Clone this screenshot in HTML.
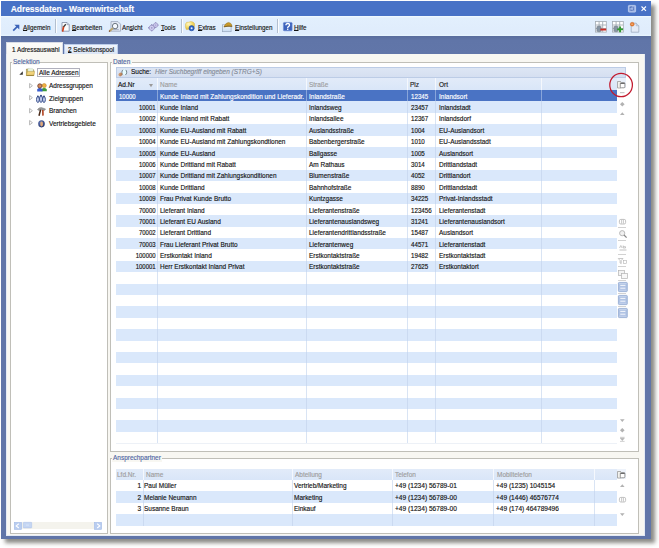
<!DOCTYPE html><html><head><meta charset="utf-8"><style>
*{margin:0;padding:0;box-sizing:border-box}
html,body{width:659px;height:548px;overflow:hidden;background:#fff;font-family:"Liberation Sans", sans-serif;}
.ab{position:absolute}
.t{position:absolute;font-size:7.4px;letter-spacing:0px;line-height:8px;white-space:nowrap;color:#141414;-webkit-text-stroke:0.16px currentColor;transform:scaleX(0.875);transform-origin:0 50%}
.r{transform-origin:100% 50%}
svg{position:absolute;overflow:visible}
u{text-decoration-thickness:0.55px;text-underline-offset:0.2px}
</style></head><body>
<div class="ab" style="left:1.30px;top:1.30px;width:649.50px;height:537.70px;background:#6075a8;box-shadow:4px 4px 4px rgba(25,25,15,0.5)"></div>
<div class="ab" style="left:1.30px;top:1.30px;width:649.50px;height:15.00px;background:#4872c6"></div>
<div class="t" style="left:10.70px;top:5.20px;font-weight:bold;font-size:8.5px;letter-spacing:-0.05px;color:#fff;transform:none;-webkit-text-stroke:0.1px #fff">Adressdaten - Warenwirtschaft</div>
<svg style="left:628.1px;top:5px" width="8" height="7.5" viewBox="0 0 8 7.5"><rect x="0.4" y="0.4" width="7.2" height="6.7" rx="0.8" fill="#9fb6e6" stroke="#c3d2f0" stroke-width="0.8"/><path d="M2 2.2 H5.6 V5.3 H2 Z M3.2 2.2 V1.4" fill="none" stroke="#3b5aa6" stroke-width="0.8" stroke-dasharray="0.9 0.5"/></svg>
<svg style="left:640.7px;top:5.9px" width="5.5" height="5.3" viewBox="0 0 5.5 5.3"><path d="M0.5 0.5 L5 4.8 M5 0.5 L0.5 4.8" stroke="#fff" stroke-width="1.1"/></svg>
<div class="ab" style="left:1.30px;top:16.30px;width:649.50px;height:19.60px;background:linear-gradient(#f2fbff,#e2effd 10%,#dfecfc 90%,#e8f5fe)"></div>
<div class="ab" style="left:55.10px;top:19.30px;width:1.00px;height:13.80px;background:#b3bfcf"></div>
<div class="ab" style="left:56.10px;top:19.30px;width:0.80px;height:13.80px;background:#fbfdff"></div>
<div class="ab" style="left:180.60px;top:19.30px;width:1.00px;height:13.80px;background:#b3bfcf"></div>
<div class="ab" style="left:181.60px;top:19.30px;width:0.80px;height:13.80px;background:#fbfdff"></div>
<div class="ab" style="left:276.80px;top:19.30px;width:1.00px;height:13.80px;background:#b3bfcf"></div>
<div class="ab" style="left:277.80px;top:19.30px;width:0.80px;height:13.80px;background:#fbfdff"></div>
<svg style="left:12px;top:23.5px" width="8" height="7.5" viewBox="0 0 8 7.5"><path d="M1.2 6.6 L6 1.8" stroke="#3b63b8" stroke-width="1.7"/><path d="M2.4 0.7 H7.3 V5.6 Z" fill="#3b63b8"/></svg>
<div class="t" style="left:23.30px;top:23.90px;transform:scaleX(0.845)"><u>A</u>llgemein</div>
<svg style="left:60.8px;top:21.8px" width="9" height="10" viewBox="0 0 9 10"><path d="M1 0.5 H6 L8.2 2.7 V9.2 H1 Z" fill="#fbfcfe" stroke="#7f8da6" stroke-width="0.8"/><path d="M6 0.5 V2.7 H8.2" fill="#c9d3e4" stroke="#7f8da6" stroke-width="0.5"/><path d="M4.8 2.3 L2.2 5.2" stroke="#3a3a3a" stroke-width="1.3"/><path d="M2.6 4.6 L1.6 9.6" stroke="#d0401c" stroke-width="1.7"/></svg>
<div class="t" style="left:72.00px;top:23.90px;transform:scaleX(0.845)"><u>B</u>earbeiten</div>
<svg style="left:107.8px;top:20.9px" width="13.2" height="11" viewBox="0 0 13.2 11"><path d="M3 0.6 H10 L12.6 3.2 V10.2 H3 Z" fill="#e3eaf5" stroke="#9aa6ba" stroke-width="0.8"/><path d="M4.3 8.6 H10.8" stroke="#8e9ab0" stroke-width="0.7"/><circle cx="7.1" cy="5.1" r="2.7" fill="#f6faff" stroke="#66717c" stroke-width="1"/><path d="M4.9 7.2 L1.3 10.2" stroke="#bda870" stroke-width="2"/><path d="M2.2 9.6 L1 10.6" stroke="#7a4a30" stroke-width="1.2"/></svg>
<div class="t" style="left:121.50px;top:23.90px;transform:scaleX(0.845)">An<u>s</u>icht</div>
<svg style="left:148.2px;top:21.9px" width="11" height="10" viewBox="0 0 11 10"><g fill="#8c88ba"><rect x="3.2" y="2.3" width="1.1" height="7"/><rect x="0.2" y="5.3" width="7" height="1.1"/><rect x="1.2" y="3.3" width="5" height="5" transform="rotate(45 3.75 5.85)"/><rect x="7.2" y="0.2" width="1" height="5.8"/><rect x="4.8" y="2.6" width="5.8" height="1"/><rect x="6" y="1.4" width="3.4" height="3.4" transform="rotate(45 7.7 3.1)"/></g><circle cx="3.75" cy="5.85" r="2.6" fill="#d2cff0" stroke="#8a86b8" stroke-width="0.5"/><circle cx="7.7" cy="3.1" r="2.2" fill="#cdc9ee" stroke="#8a86b8" stroke-width="0.5"/><circle cx="3.75" cy="5.85" r="0.9" fill="#9d99c8"/><circle cx="7.7" cy="3.1" r="0.7" fill="#9d99c8"/></svg>
<div class="t" style="left:160.80px;top:23.90px;transform:scaleX(0.845)"><u>T</u>ools</div>
<svg style="left:185.4px;top:21.4px" width="10.5" height="10.2" viewBox="0 0 10.5 10.2"><defs><radialGradient id="yg" cx="0.35" cy="0.3" r="0.8"><stop offset="0" stop-color="#fff8c8"/><stop offset="0.5" stop-color="#f5dc6a"/><stop offset="1" stop-color="#d8b23a"/></radialGradient></defs><path d="M0.5 3 Q1.2 0.6 3.6 1.2 Q5.6 0 8 1 Q10 1.8 9.6 4.6 L9 8 L1.2 8.6 Q0 6 0.5 3 Z" fill="url(#yg)" stroke="#d2ae40" stroke-width="0.4"/><circle cx="6.6" cy="7.2" r="2.6" fill="#2a62c8" stroke="#1a3f8a" stroke-width="0.5"/><circle cx="6.6" cy="7.2" r="1" fill="#e8f0ff"/></svg>
<div class="t" style="left:197.70px;top:23.90px;transform:scaleX(0.845)"><u>E</u>xtras</div>
<svg style="left:222px;top:21.6px" width="10.5" height="10.2" viewBox="0 0 10.5 10.2"><defs><linearGradient id="wg" x1="0" y1="0" x2="0" y2="1"><stop offset="0" stop-color="#f4f8fc"/><stop offset="1" stop-color="#c8dcf2"/></linearGradient></defs><rect x="0.5" y="2.8" width="8.6" height="6.9" fill="url(#wg)" stroke="#97a6bb" stroke-width="0.7"/><path d="M1.8 4.9 Q3.5 0.6 6.8 0.4 Q9.6 0.8 10.2 4.4 Q6 3.9 1.8 4.9 Z" fill="#c99a2c" stroke="#8e6a18" stroke-width="0.4"/><path d="M2 4.8 Q6 3.8 10 4.4" stroke="#5a4010" stroke-width="0.6" fill="none"/></svg>
<div class="t" style="left:234.80px;top:23.90px;transform:scaleX(0.845)"><u>E</u>instellungen</div>
<svg style="left:282.6px;top:21.9px" width="9.5" height="9.2" viewBox="0 0 9.5 9.2"><rect x="0.4" y="0.4" width="8.7" height="8.4" rx="0.9" fill="#3c62bc" stroke="#6a8ad4" stroke-width="0.6"/><path d="M2.9 3.2 Q2.9 1.5 4.8 1.5 Q6.6 1.5 6.6 3.1 Q6.6 4.2 5.2 4.8 Q4.7 5.1 4.7 6" fill="none" stroke="#fff" stroke-width="1.3"/><rect x="4" y="6.6" width="1.4" height="1.3" fill="#fff"/></svg>
<div class="t" style="left:294.30px;top:23.90px;transform:scaleX(0.845)"><u>H</u>ilfe</div>
<svg style="left:595.4px;top:21.3px" width="12" height="12" viewBox="0 0 12 12"><rect x="0.5" y="0.5" width="10.8" height="10.6" fill="#fff" stroke="#a3abb4" stroke-width="0.8"/><path d="M0.5 4 H11.3 M0.5 7.5 H11.3 M4.1 0.5 V11.1 M7.7 0.5 V11.1" stroke="#a3abb4" stroke-width="0.9"/><path d="M1.8 5.5 Q4 4.6 6.2 5.5 V10.3 Q4 11.2 1.8 10.3 Z" fill="#8795a3" stroke="#66727f" stroke-width="0.4"/><rect x="5.4" y="7.6" width="5.8" height="1.9" fill="#cc2a22"/></svg>
<svg style="left:611.9px;top:21.3px" width="12" height="12" viewBox="0 0 12 12"><rect x="0.5" y="0.5" width="10.8" height="10.6" fill="#fff" stroke="#a3abb4" stroke-width="0.8"/><path d="M0.5 4 H11.3 M0.5 7.5 H11.3 M4.1 0.5 V11.1 M7.7 0.5 V11.1" stroke="#a3abb4" stroke-width="0.9"/><path d="M1.8 5.5 Q4 4.6 6.2 5.5 V10.3 Q4 11.2 1.8 10.3 Z" fill="#8795a3" stroke="#66727f" stroke-width="0.4"/><path d="M5.2 8.4 H11 M8.1 5.6 V11.3" stroke="#2f9a2f" stroke-width="1.9"/></svg>
<svg style="left:629.8px;top:21.8px" width="10" height="11" viewBox="0 0 10 11"><path d="M1.2 1.2 H6.2 L8.8 3.8 V10.2 H1.2 Z" fill="#e4ebf7" stroke="#95a3b8" stroke-width="0.7"/><path d="M6.2 1.2 V3.8 H8.8" fill="#c8d3e6" stroke="#95a3b8" stroke-width="0.4"/><circle cx="2.2" cy="2.2" r="2" fill="#e57a2c" stroke="#c65a1a" stroke-width="0.3"/><path d="M1.2 2.2 H3.2" stroke="#fde3c8" stroke-width="0.6"/></svg>
<div class="ab" style="left:1.30px;top:35.90px;width:649.50px;height:18.10px;background:linear-gradient(#586c9c,#6075a8 25%,#6176a9)"></div>
<div class="ab" style="left:63.70px;top:43.80px;width:54.10px;height:10.70px;background:linear-gradient(#f0f5fd,#dae5f6);border:1px solid #bccdea;border-bottom:none"></div>
<div class="ab" style="left:5.90px;top:41.80px;width:57.60px;height:12.70px;background:linear-gradient(#fcfcfa,#f8f7f2);border:1px solid #d9dde6;border-bottom:none"></div>
<div class="t" style="left:12.20px;top:45.60px;transform:scaleX(0.855)">1 Adressauswahl</div>
<div class="t" style="left:68.20px;top:46.10px;transform:scaleX(0.852)"><u>2</u> Selektionspool</div>
<div class="ab" style="left:6.20px;top:53.80px;width:639.00px;height:482.40px;background:#f8f7f2;border:0.8px solid #e4eaf4;border-top:none"></div>
<div class="ab" style="left:6.90px;top:54.00px;width:55.60px;height:1.00px;background:#f8f7f2"></div>
<div class="ab" style="left:10.20px;top:62.00px;width:98.20px;height:471.90px;background:#fff;border:1px solid #c0bfb8"></div>
<div class="ab" style="left:12.00px;top:58.00px;width:27.20px;height:7.00px;background:#f8f7f2"></div>
<div class="t" style="left:13.00px;top:58.00px;color:#5068a4">Selektion</div>
<div class="ab" style="left:110.40px;top:62.00px;width:528.70px;height:390.30px;background:#fff;border:1px solid #c0bfb8"></div>
<div class="ab" style="left:112.00px;top:58.00px;width:19.50px;height:7.00px;background:#f8f7f2"></div>
<div class="t" style="left:112.90px;top:58.00px;color:#5068a4">Daten</div>
<div class="ab" style="left:110.40px;top:458.00px;width:528.70px;height:75.90px;background:#fff;border:1px solid #c0bfb8"></div>
<div class="ab" style="left:112.00px;top:454.00px;width:50.00px;height:8.00px;background:#f8f7f2"></div>
<div class="t" style="left:113.00px;top:453.90px;color:#5068a4">Ansprechpartner</div>
<svg style="left:19px;top:71.3px" width="4" height="4" viewBox="0 0 4 4"><path d="M3.8 0.3 V3.8 H0.3 Z" fill="#333"/></svg>
<svg style="left:26px;top:68.2px" width="9" height="8" viewBox="0 0 9 8"><path d="M0.4 1 H3.2 L4 1.8 H7.8 V7.4 H0.4 Z" fill="#b9a24a" stroke="#8a7428" stroke-width="0.4"/><path d="M1.8 0.4 H6.4 L7.2 1.2 V4 H1.8 Z" fill="#e6f2e0" stroke="#b8c8b0" stroke-width="0.3"/><path d="M0.4 7.6 L1.4 3.4 H8.6 L7.8 7.6 Z" fill="#f1d27a" stroke="#a88a30" stroke-width="0.4"/><path d="M0.6 7.4 H7.8" stroke="#7a6420" stroke-width="0.6"/></svg>
<div class="ab" style="left:37.10px;top:68.10px;width:42.70px;height:9.40px;border:0.9px solid #b0b0bc;background:#fcfcfc"></div>
<div class="t" style="left:38.80px;top:68.60px;">Alle Adressen</div>
<svg style="left:28.7px;top:82.8px" width="4" height="6" viewBox="0 0 4 6"><path d="M0.6 0.5 L3.4 2.7 L0.6 4.9 Z" fill="#fff" stroke="#9a9a9a" stroke-width="0.7"/></svg>
<div class="t" style="left:49.30px;top:82.20px;">Adressgruppen</div>
<svg style="left:28.7px;top:95.1px" width="4" height="6" viewBox="0 0 4 6"><path d="M0.6 0.5 L3.4 2.7 L0.6 4.9 Z" fill="#fff" stroke="#9a9a9a" stroke-width="0.7"/></svg>
<div class="t" style="left:49.30px;top:94.50px;">Zielgruppen</div>
<svg style="left:28.7px;top:107.89999999999999px" width="4" height="6" viewBox="0 0 4 6"><path d="M0.6 0.5 L3.4 2.7 L0.6 4.9 Z" fill="#fff" stroke="#9a9a9a" stroke-width="0.7"/></svg>
<div class="t" style="left:49.30px;top:107.30px;">Branchen</div>
<svg style="left:28.7px;top:120.3px" width="4" height="6" viewBox="0 0 4 6"><path d="M0.6 0.5 L3.4 2.7 L0.6 4.9 Z" fill="#fff" stroke="#9a9a9a" stroke-width="0.7"/></svg>
<div class="t" style="left:49.30px;top:119.70px;">Vertriebsgebiete</div>
<svg style="left:36.6px;top:82.6px" width="10" height="8.5" viewBox="0 0 10 8.5"><path d="M4.4 8.3 V6.2 Q7.2 3.6 9.8 6.2 V8.3 Z" fill="#3c9a3c"/><circle cx="7.2" cy="2.6" r="2.1" fill="#f0b040" stroke="#b87a20" stroke-width="0.5"/><path d="M0.2 8.4 V6.3 Q2.8 3.8 5.5 6.3 V8.4 Z" fill="#3a5ed0"/><circle cx="2.8" cy="2.9" r="2.1" fill="#d08a60" stroke="#5a2a12" stroke-width="0.7"/></svg>
<svg style="left:36.3px;top:94.8px" width="10" height="8" viewBox="0 0 10 8"><g stroke="#2f4682" stroke-width="0.9" fill="#c9d3f2"><ellipse cx="1.9" cy="4.5" rx="1.4" ry="3"/><ellipse cx="8" cy="4.5" rx="1.4" ry="3"/><ellipse cx="5" cy="4" rx="1.5" ry="3.4"/></g><g fill="#2f4682"><circle cx="1.9" cy="1.3" r="0.9"/><circle cx="5" cy="0.7" r="0.9"/><circle cx="8" cy="1.3" r="0.9"/></g></svg>
<svg style="left:37.1px;top:106.9px" width="9" height="9" viewBox="0 0 9 9"><path d="M0.4 2.6 Q2 0.2 4.6 0.6 L8.6 2 L7.6 3.4 L4.4 2.8 L2 3.6 Z" fill="#9a9a9a" stroke="#6e6e6e" stroke-width="0.4"/><path d="M3.6 2.8 L2 8.8" stroke="#4a2a18" stroke-width="1.5"/><path d="M5.8 3 L6 8.6" stroke="#b0401e" stroke-width="1.6"/></svg>
<svg style="left:37.6px;top:119.6px" width="7.2" height="7.8" viewBox="0 0 7.2 7.8"><defs><radialGradient id="gl" cx="0.4" cy="0.35" r="0.7"><stop offset="0" stop-color="#6a80c0"/><stop offset="1" stop-color="#1e2e64"/></radialGradient></defs><ellipse cx="3.5" cy="3.8" rx="3.3" ry="3.6" fill="url(#gl)"/><ellipse cx="3.6" cy="4" rx="1.4" ry="2.4" fill="#e0a878"/></svg>
<div class="ab" style="left:22.00px;top:522.30px;width:71.80px;height:6.70px;background:#f4f3ed"></div>
<svg style="left:13.8px;top:522px" width="8" height="8" viewBox="0 0 8 8"><rect x="0.3" y="0.3" width="7.4" height="7.2" fill="#b9cdf0" stroke="#9db6e4" stroke-width="0.5"/><path d="M4.8 1.8 L2.2 3.9 L4.8 6" fill="none" stroke="#fff" stroke-width="1.1"/></svg>
<svg style="left:23.4px;top:522.4px" width="9" height="6" viewBox="0 0 9 6"><rect x="0.3" y="0.3" width="8.4" height="5.6" rx="0.5" fill="#c5d6f3" stroke="#a8bfe8" stroke-width="0.5"/><path d="M3 3.1 H6" stroke="#e6eefb" stroke-width="0.6"/></svg>
<svg style="left:94px;top:522px" width="8" height="8" viewBox="0 0 8 8"><rect x="0.3" y="0.3" width="7.4" height="7.2" fill="#b9cdf0" stroke="#9db6e4" stroke-width="0.5"/><path d="M3.2 1.8 L5.8 3.9 L3.2 6" fill="none" stroke="#fff" stroke-width="1.1"/></svg>
<div class="ab" style="left:116.20px;top:66.60px;width:509.80px;height:11.10px;background:linear-gradient(#dde6f4,#d5dff1);border:1px solid #bccce6"></div>
<svg style="left:116.5px;top:67.5px" width="11" height="9.5" viewBox="0 0 11 9.5"><defs><linearGradient id="hg" x1="0" y1="0" x2="1" y2="1"><stop offset="0" stop-color="#e8b48a"/><stop offset="1" stop-color="#9a6440"/></linearGradient></defs><ellipse cx="7.3" cy="4.3" rx="2.4" ry="3" fill="#e6fbff" stroke="#55666e" stroke-width="0.8" stroke-dasharray="5 3" stroke-dashoffset="-6"/><ellipse cx="3.4" cy="6.4" rx="2.1" ry="1.8" transform="rotate(-35 3.4 6.4)" fill="url(#hg)"/></svg>
<div class="t" style="left:130.60px;top:68.10px;color:#111">Suche:</div>
<div class="t" style="left:155.00px;top:68.10px;font-style:italic;color:#858c98">Hier Suchbegriff eingeben (STRG+S)</div>
<div class="ab" style="left:116.10px;top:78.30px;width:500.80px;height:12.10px;background:linear-gradient(#e2ebf9,#d9e6f8)"></div>
<div class="ab" style="left:616.90px;top:78.30px;width:9.10px;height:10.20px;background:#e9f0fa"></div>
<div class="ab" style="left:156.80px;top:90.00px;width:0.80px;height:353.09px;background:#d9e4f4"></div>
<div class="ab" style="left:156.80px;top:78.30px;width:0.90px;height:11.70px;background:#f5f8fd"></div>
<div class="ab" style="left:306.00px;top:90.00px;width:0.80px;height:353.09px;background:#d9e4f4"></div>
<div class="ab" style="left:306.00px;top:78.30px;width:0.90px;height:11.70px;background:#f5f8fd"></div>
<div class="ab" style="left:406.90px;top:90.00px;width:0.80px;height:353.09px;background:#d9e4f4"></div>
<div class="ab" style="left:406.90px;top:78.30px;width:0.90px;height:11.70px;background:#f5f8fd"></div>
<div class="ab" style="left:435.40px;top:90.00px;width:0.80px;height:353.09px;background:#d9e4f4"></div>
<div class="ab" style="left:435.40px;top:78.30px;width:0.90px;height:11.70px;background:#f5f8fd"></div>
<div class="ab" style="left:541.00px;top:90.00px;width:0.80px;height:353.09px;background:#d9e4f4"></div>
<div class="ab" style="left:541.00px;top:78.30px;width:0.90px;height:11.70px;background:#f5f8fd"></div>
<div class="t" style="left:117.60px;top:81.30px;color:#111">Ad.Nr</div>
<svg style="left:149.1px;top:83.8px" width="4" height="3.5" viewBox="0 0 4 3.5"><path d="M0 0 H4 L2 3.2 Z" fill="#9a9a9a"/></svg>
<div class="t" style="left:160.20px;top:81.30px;color:#9d9d9d">Name</div>
<div class="t" style="left:309.30px;top:81.30px;color:#9d9d9d">Straße</div>
<div class="t" style="left:410.20px;top:81.30px;color:#222">Plz</div>
<div class="t" style="left:438.90px;top:81.30px;color:#222">Ort</div>
<div class="ab" style="left:116.10px;top:90.40px;width:500.80px;height:10.99px;background:#4a73c4"></div>
<div class="ab" style="left:156.80px;top:90.40px;width:0.80px;height:10.99px;background:#88a5da"></div>
<div class="ab" style="left:306.00px;top:90.40px;width:0.80px;height:10.99px;background:#88a5da"></div>
<div class="ab" style="left:406.90px;top:90.40px;width:0.80px;height:10.99px;background:#88a5da"></div>
<div class="ab" style="left:435.40px;top:90.40px;width:0.80px;height:10.99px;background:#88a5da"></div>
<div class="ab" style="left:541.00px;top:90.40px;width:0.80px;height:10.99px;background:#88a5da"></div>
<div class="t" style="left:118.90px;top:92.59px;color:#fff;transform:scaleX(0.81)">10000</div>
<div class="t" style="left:160.00px;top:92.59px;color:#fff">Kunde Inland mit Zahlungskondition und Lieferadr.</div>
<div class="t" style="left:309.30px;top:92.59px;color:#fff">Inlandstraße</div>
<div class="t" style="left:410.70px;top:92.59px;color:#fff;transform:scaleX(0.84)">12345</div>
<div class="t" style="left:438.90px;top:92.59px;color:#fff">Inlandsort</div>
<div class="ab" style="left:116.10px;top:101.39px;width:500.80px;height:11.39px;background:#dae8fb"></div>
<div class="ab" style="left:156.80px;top:101.39px;width:0.80px;height:11.39px;background:#cbdaf1"></div>
<div class="ab" style="left:306.00px;top:101.39px;width:0.80px;height:11.39px;background:#cbdaf1"></div>
<div class="ab" style="left:406.90px;top:101.39px;width:0.80px;height:11.39px;background:#cbdaf1"></div>
<div class="ab" style="left:435.40px;top:101.39px;width:0.80px;height:11.39px;background:#cbdaf1"></div>
<div class="ab" style="left:541.00px;top:101.39px;width:0.80px;height:11.39px;background:#cbdaf1"></div>
<div class="t r" style="right:503.60px;top:103.99px;color:#141414;transform:scaleX(0.81)">10001</div>
<div class="t" style="left:160.00px;top:103.99px;color:#141414">Kunde Inland</div>
<div class="t" style="left:309.30px;top:103.99px;color:#141414">Inlandsweg</div>
<div class="t" style="left:410.70px;top:103.99px;color:#141414;transform:scaleX(0.84)">23457</div>
<div class="t" style="left:438.90px;top:103.99px;color:#141414">Inlandstadt</div>
<div class="t r" style="right:503.60px;top:115.38px;color:#141414;transform:scaleX(0.81)">10002</div>
<div class="t" style="left:160.00px;top:115.38px;color:#141414">Kunde Inland mit Rabatt</div>
<div class="t" style="left:309.30px;top:115.38px;color:#141414">Inlandsallee</div>
<div class="t" style="left:410.70px;top:115.38px;color:#141414;transform:scaleX(0.84)">12367</div>
<div class="t" style="left:438.90px;top:115.38px;color:#141414">Inlandsdorf</div>
<div class="ab" style="left:116.10px;top:124.17px;width:500.80px;height:11.39px;background:#dae8fb"></div>
<div class="ab" style="left:156.80px;top:124.17px;width:0.80px;height:11.39px;background:#cbdaf1"></div>
<div class="ab" style="left:306.00px;top:124.17px;width:0.80px;height:11.39px;background:#cbdaf1"></div>
<div class="ab" style="left:406.90px;top:124.17px;width:0.80px;height:11.39px;background:#cbdaf1"></div>
<div class="ab" style="left:435.40px;top:124.17px;width:0.80px;height:11.39px;background:#cbdaf1"></div>
<div class="ab" style="left:541.00px;top:124.17px;width:0.80px;height:11.39px;background:#cbdaf1"></div>
<div class="t r" style="right:503.60px;top:126.77px;color:#141414;transform:scaleX(0.81)">10003</div>
<div class="t" style="left:160.00px;top:126.77px;color:#141414">Kunde EU-Ausland mit Rabatt</div>
<div class="t" style="left:309.30px;top:126.77px;color:#141414">Auslandsstraße</div>
<div class="t" style="left:410.70px;top:126.77px;color:#141414;transform:scaleX(0.84)">1004</div>
<div class="t" style="left:438.90px;top:126.77px;color:#141414">EU-Auslandsort</div>
<div class="t r" style="right:503.60px;top:138.16px;color:#141414;transform:scaleX(0.81)">10004</div>
<div class="t" style="left:160.00px;top:138.16px;color:#141414">Kunde EU-Ausland mit Zahlungskondtionen</div>
<div class="t" style="left:309.30px;top:138.16px;color:#141414">Babenbergerstraße</div>
<div class="t" style="left:410.70px;top:138.16px;color:#141414;transform:scaleX(0.84)">1010</div>
<div class="t" style="left:438.90px;top:138.16px;color:#141414">EU-Auslandsstadt</div>
<div class="ab" style="left:116.10px;top:146.95px;width:500.80px;height:11.39px;background:#dae8fb"></div>
<div class="ab" style="left:156.80px;top:146.95px;width:0.80px;height:11.39px;background:#cbdaf1"></div>
<div class="ab" style="left:306.00px;top:146.95px;width:0.80px;height:11.39px;background:#cbdaf1"></div>
<div class="ab" style="left:406.90px;top:146.95px;width:0.80px;height:11.39px;background:#cbdaf1"></div>
<div class="ab" style="left:435.40px;top:146.95px;width:0.80px;height:11.39px;background:#cbdaf1"></div>
<div class="ab" style="left:541.00px;top:146.95px;width:0.80px;height:11.39px;background:#cbdaf1"></div>
<div class="t r" style="right:503.60px;top:149.54px;color:#141414;transform:scaleX(0.81)">10005</div>
<div class="t" style="left:160.00px;top:149.54px;color:#141414">Kunde EU-Ausland</div>
<div class="t" style="left:309.30px;top:149.54px;color:#141414">Ballgasse</div>
<div class="t" style="left:410.70px;top:149.54px;color:#141414;transform:scaleX(0.84)">1005</div>
<div class="t" style="left:438.90px;top:149.54px;color:#141414">Auslandsort</div>
<div class="t r" style="right:503.60px;top:160.94px;color:#141414;transform:scaleX(0.81)">10006</div>
<div class="t" style="left:160.00px;top:160.94px;color:#141414">Kunde Drittland mit Rabatt</div>
<div class="t" style="left:309.30px;top:160.94px;color:#141414">Am Rathaus</div>
<div class="t" style="left:410.70px;top:160.94px;color:#141414;transform:scaleX(0.84)">3014</div>
<div class="t" style="left:438.90px;top:160.94px;color:#141414">Drittlandstadt</div>
<div class="ab" style="left:116.10px;top:169.73px;width:500.80px;height:11.39px;background:#dae8fb"></div>
<div class="ab" style="left:156.80px;top:169.73px;width:0.80px;height:11.39px;background:#cbdaf1"></div>
<div class="ab" style="left:306.00px;top:169.73px;width:0.80px;height:11.39px;background:#cbdaf1"></div>
<div class="ab" style="left:406.90px;top:169.73px;width:0.80px;height:11.39px;background:#cbdaf1"></div>
<div class="ab" style="left:435.40px;top:169.73px;width:0.80px;height:11.39px;background:#cbdaf1"></div>
<div class="ab" style="left:541.00px;top:169.73px;width:0.80px;height:11.39px;background:#cbdaf1"></div>
<div class="t r" style="right:503.60px;top:172.33px;color:#141414;transform:scaleX(0.81)">10007</div>
<div class="t" style="left:160.00px;top:172.33px;color:#141414">Kunde Drittland mit Zahlungskonditionen</div>
<div class="t" style="left:309.30px;top:172.33px;color:#141414">Blumenstraße</div>
<div class="t" style="left:410.70px;top:172.33px;color:#141414;transform:scaleX(0.84)">4052</div>
<div class="t" style="left:438.90px;top:172.33px;color:#141414">Drittlandort</div>
<div class="t r" style="right:503.60px;top:183.72px;color:#141414;transform:scaleX(0.81)">10008</div>
<div class="t" style="left:160.00px;top:183.72px;color:#141414">Kunde Drittland</div>
<div class="t" style="left:309.30px;top:183.72px;color:#141414">Bahnhofstraße</div>
<div class="t" style="left:410.70px;top:183.72px;color:#141414;transform:scaleX(0.84)">8890</div>
<div class="t" style="left:438.90px;top:183.72px;color:#141414">Drittlandstadt</div>
<div class="ab" style="left:116.10px;top:192.51px;width:500.80px;height:11.39px;background:#dae8fb"></div>
<div class="ab" style="left:156.80px;top:192.51px;width:0.80px;height:11.39px;background:#cbdaf1"></div>
<div class="ab" style="left:306.00px;top:192.51px;width:0.80px;height:11.39px;background:#cbdaf1"></div>
<div class="ab" style="left:406.90px;top:192.51px;width:0.80px;height:11.39px;background:#cbdaf1"></div>
<div class="ab" style="left:435.40px;top:192.51px;width:0.80px;height:11.39px;background:#cbdaf1"></div>
<div class="ab" style="left:541.00px;top:192.51px;width:0.80px;height:11.39px;background:#cbdaf1"></div>
<div class="t r" style="right:503.60px;top:195.10px;color:#141414;transform:scaleX(0.81)">10009</div>
<div class="t" style="left:160.00px;top:195.10px;color:#141414">Frau Privat Kunde Brutto</div>
<div class="t" style="left:309.30px;top:195.10px;color:#141414">Kuntzgasse</div>
<div class="t" style="left:410.70px;top:195.10px;color:#141414;transform:scaleX(0.84)">34225</div>
<div class="t" style="left:438.90px;top:195.10px;color:#141414">Privat-Inlandsstadt</div>
<div class="t r" style="right:503.60px;top:206.50px;color:#141414;transform:scaleX(0.81)">70000</div>
<div class="t" style="left:160.00px;top:206.50px;color:#141414">Lieferant Inland</div>
<div class="t" style="left:309.30px;top:206.50px;color:#141414">Lieferantenstraße</div>
<div class="t" style="left:410.70px;top:206.50px;color:#141414;transform:scaleX(0.84)">123456</div>
<div class="t" style="left:438.90px;top:206.50px;color:#141414">Lieferantenstadt</div>
<div class="ab" style="left:116.10px;top:215.29px;width:500.80px;height:11.39px;background:#dae8fb"></div>
<div class="ab" style="left:156.80px;top:215.29px;width:0.80px;height:11.39px;background:#cbdaf1"></div>
<div class="ab" style="left:306.00px;top:215.29px;width:0.80px;height:11.39px;background:#cbdaf1"></div>
<div class="ab" style="left:406.90px;top:215.29px;width:0.80px;height:11.39px;background:#cbdaf1"></div>
<div class="ab" style="left:435.40px;top:215.29px;width:0.80px;height:11.39px;background:#cbdaf1"></div>
<div class="ab" style="left:541.00px;top:215.29px;width:0.80px;height:11.39px;background:#cbdaf1"></div>
<div class="t r" style="right:503.60px;top:217.89px;color:#141414;transform:scaleX(0.81)">70001</div>
<div class="t" style="left:160.00px;top:217.89px;color:#141414">Lieferant EU Ausland</div>
<div class="t" style="left:309.30px;top:217.89px;color:#141414">Lieferantenauslandsweg</div>
<div class="t" style="left:410.70px;top:217.89px;color:#141414;transform:scaleX(0.84)">31241</div>
<div class="t" style="left:438.90px;top:217.89px;color:#141414">Lieferantenauslandsort</div>
<div class="t r" style="right:503.60px;top:229.28px;color:#141414;transform:scaleX(0.81)">70002</div>
<div class="t" style="left:160.00px;top:229.28px;color:#141414">Lieferant Drittland</div>
<div class="t" style="left:309.30px;top:229.28px;color:#141414">Lieferantendrittlandsstraße</div>
<div class="t" style="left:410.70px;top:229.28px;color:#141414;transform:scaleX(0.84)">15487</div>
<div class="t" style="left:438.90px;top:229.28px;color:#141414">Auslandsort</div>
<div class="ab" style="left:116.10px;top:238.07px;width:500.80px;height:11.39px;background:#dae8fb"></div>
<div class="ab" style="left:156.80px;top:238.07px;width:0.80px;height:11.39px;background:#cbdaf1"></div>
<div class="ab" style="left:306.00px;top:238.07px;width:0.80px;height:11.39px;background:#cbdaf1"></div>
<div class="ab" style="left:406.90px;top:238.07px;width:0.80px;height:11.39px;background:#cbdaf1"></div>
<div class="ab" style="left:435.40px;top:238.07px;width:0.80px;height:11.39px;background:#cbdaf1"></div>
<div class="ab" style="left:541.00px;top:238.07px;width:0.80px;height:11.39px;background:#cbdaf1"></div>
<div class="t r" style="right:503.60px;top:240.66px;color:#141414;transform:scaleX(0.81)">70003</div>
<div class="t" style="left:160.00px;top:240.66px;color:#141414">Frau Lieferant Privat Brutto</div>
<div class="t" style="left:309.30px;top:240.66px;color:#141414">Lieferantenweg</div>
<div class="t" style="left:410.70px;top:240.66px;color:#141414;transform:scaleX(0.84)">44571</div>
<div class="t" style="left:438.90px;top:240.66px;color:#141414">Lieferantenstadt</div>
<div class="t r" style="right:503.60px;top:252.06px;color:#141414;transform:scaleX(0.81)">100000</div>
<div class="t" style="left:160.00px;top:252.06px;color:#141414">Erstkontakt Inland</div>
<div class="t" style="left:309.30px;top:252.06px;color:#141414">Erstkontaktstraße</div>
<div class="t" style="left:410.70px;top:252.06px;color:#141414;transform:scaleX(0.84)">19482</div>
<div class="t" style="left:438.90px;top:252.06px;color:#141414">Erstkontaktstadt</div>
<div class="ab" style="left:116.10px;top:260.85px;width:500.80px;height:11.39px;background:#dae8fb"></div>
<div class="ab" style="left:156.80px;top:260.85px;width:0.80px;height:11.39px;background:#cbdaf1"></div>
<div class="ab" style="left:306.00px;top:260.85px;width:0.80px;height:11.39px;background:#cbdaf1"></div>
<div class="ab" style="left:406.90px;top:260.85px;width:0.80px;height:11.39px;background:#cbdaf1"></div>
<div class="ab" style="left:435.40px;top:260.85px;width:0.80px;height:11.39px;background:#cbdaf1"></div>
<div class="ab" style="left:541.00px;top:260.85px;width:0.80px;height:11.39px;background:#cbdaf1"></div>
<div class="t r" style="right:503.60px;top:263.44px;color:#141414;transform:scaleX(0.81)">100001</div>
<div class="t" style="left:160.00px;top:263.44px;color:#141414">Herr Erstkontakt Inland Privat</div>
<div class="t" style="left:309.30px;top:263.44px;color:#141414">Erstkontaktstraße</div>
<div class="t" style="left:410.70px;top:263.44px;color:#141414;transform:scaleX(0.84)">27625</div>
<div class="t" style="left:438.90px;top:263.44px;color:#141414">Erstkontaktort</div>
<div class="ab" style="left:116.10px;top:283.63px;width:500.80px;height:11.39px;background:#dae8fb"></div>
<div class="ab" style="left:156.80px;top:283.63px;width:0.80px;height:11.39px;background:#cbdaf1"></div>
<div class="ab" style="left:306.00px;top:283.63px;width:0.80px;height:11.39px;background:#cbdaf1"></div>
<div class="ab" style="left:406.90px;top:283.63px;width:0.80px;height:11.39px;background:#cbdaf1"></div>
<div class="ab" style="left:435.40px;top:283.63px;width:0.80px;height:11.39px;background:#cbdaf1"></div>
<div class="ab" style="left:541.00px;top:283.63px;width:0.80px;height:11.39px;background:#cbdaf1"></div>
<div class="ab" style="left:116.10px;top:306.41px;width:500.80px;height:11.39px;background:#dae8fb"></div>
<div class="ab" style="left:156.80px;top:306.41px;width:0.80px;height:11.39px;background:#cbdaf1"></div>
<div class="ab" style="left:306.00px;top:306.41px;width:0.80px;height:11.39px;background:#cbdaf1"></div>
<div class="ab" style="left:406.90px;top:306.41px;width:0.80px;height:11.39px;background:#cbdaf1"></div>
<div class="ab" style="left:435.40px;top:306.41px;width:0.80px;height:11.39px;background:#cbdaf1"></div>
<div class="ab" style="left:541.00px;top:306.41px;width:0.80px;height:11.39px;background:#cbdaf1"></div>
<div class="ab" style="left:116.10px;top:329.19px;width:500.80px;height:11.39px;background:#dae8fb"></div>
<div class="ab" style="left:156.80px;top:329.19px;width:0.80px;height:11.39px;background:#cbdaf1"></div>
<div class="ab" style="left:306.00px;top:329.19px;width:0.80px;height:11.39px;background:#cbdaf1"></div>
<div class="ab" style="left:406.90px;top:329.19px;width:0.80px;height:11.39px;background:#cbdaf1"></div>
<div class="ab" style="left:435.40px;top:329.19px;width:0.80px;height:11.39px;background:#cbdaf1"></div>
<div class="ab" style="left:541.00px;top:329.19px;width:0.80px;height:11.39px;background:#cbdaf1"></div>
<div class="ab" style="left:116.10px;top:351.97px;width:500.80px;height:11.39px;background:#dae8fb"></div>
<div class="ab" style="left:156.80px;top:351.97px;width:0.80px;height:11.39px;background:#cbdaf1"></div>
<div class="ab" style="left:306.00px;top:351.97px;width:0.80px;height:11.39px;background:#cbdaf1"></div>
<div class="ab" style="left:406.90px;top:351.97px;width:0.80px;height:11.39px;background:#cbdaf1"></div>
<div class="ab" style="left:435.40px;top:351.97px;width:0.80px;height:11.39px;background:#cbdaf1"></div>
<div class="ab" style="left:541.00px;top:351.97px;width:0.80px;height:11.39px;background:#cbdaf1"></div>
<div class="ab" style="left:116.10px;top:374.75px;width:500.80px;height:11.39px;background:#dae8fb"></div>
<div class="ab" style="left:156.80px;top:374.75px;width:0.80px;height:11.39px;background:#cbdaf1"></div>
<div class="ab" style="left:306.00px;top:374.75px;width:0.80px;height:11.39px;background:#cbdaf1"></div>
<div class="ab" style="left:406.90px;top:374.75px;width:0.80px;height:11.39px;background:#cbdaf1"></div>
<div class="ab" style="left:435.40px;top:374.75px;width:0.80px;height:11.39px;background:#cbdaf1"></div>
<div class="ab" style="left:541.00px;top:374.75px;width:0.80px;height:11.39px;background:#cbdaf1"></div>
<div class="ab" style="left:116.10px;top:397.53px;width:500.80px;height:11.39px;background:#dae8fb"></div>
<div class="ab" style="left:156.80px;top:397.53px;width:0.80px;height:11.39px;background:#cbdaf1"></div>
<div class="ab" style="left:306.00px;top:397.53px;width:0.80px;height:11.39px;background:#cbdaf1"></div>
<div class="ab" style="left:406.90px;top:397.53px;width:0.80px;height:11.39px;background:#cbdaf1"></div>
<div class="ab" style="left:435.40px;top:397.53px;width:0.80px;height:11.39px;background:#cbdaf1"></div>
<div class="ab" style="left:541.00px;top:397.53px;width:0.80px;height:11.39px;background:#cbdaf1"></div>
<div class="ab" style="left:116.10px;top:420.31px;width:500.80px;height:11.39px;background:#dae8fb"></div>
<div class="ab" style="left:156.80px;top:420.31px;width:0.80px;height:11.39px;background:#cbdaf1"></div>
<div class="ab" style="left:306.00px;top:420.31px;width:0.80px;height:11.39px;background:#cbdaf1"></div>
<div class="ab" style="left:406.90px;top:420.31px;width:0.80px;height:11.39px;background:#cbdaf1"></div>
<div class="ab" style="left:435.40px;top:420.31px;width:0.80px;height:11.39px;background:#cbdaf1"></div>
<div class="ab" style="left:541.00px;top:420.31px;width:0.80px;height:11.39px;background:#cbdaf1"></div>
<div class="ab" style="left:116.10px;top:442.79px;width:500.80px;height:0.80px;background:#edf1f7"></div>
<svg style="left:617.2px;top:80.9px" width="9" height="8" viewBox="0 0 9 8"><path d="M4 0.5 H0.5 V7 H4" fill="#f2f2ee" stroke="#9a9a9a" stroke-width="0.8"/><rect x="3.3" y="1.6" width="4.6" height="5.2" rx="1" fill="#fff" stroke="#7e7e7e" stroke-width="0.8"/><path d="M3.4 2.4 H7.8" stroke="#666" stroke-width="1.1"/><rect x="4.4" y="3.6" width="2.4" height="2" fill="#fff"/></svg>
<svg style="left:609px;top:73px" width="25" height="24" viewBox="0 0 25 24"><ellipse cx="12.1" cy="12" rx="11.3" ry="11.7" fill="none" stroke="#c21a2e" stroke-width="1.25"/></svg>
<svg style="left:619.5px;top:92px" width="5" height="1.5" viewBox="0 0 5 1.5"><path d="M0 0.7 H4.5" stroke="#b2b2b2" stroke-width="0.9"/></svg>
<svg style="left:619.6px;top:101.8px" width="5" height="5" viewBox="0 0 5 5"><path d="M2.3 0 L4.6 2.3 L2.3 4.6 L0 2.3 Z" fill="#b2b2b2"/></svg>
<svg style="left:619.5px;top:111.8px" width="5" height="3.5" viewBox="0 0 5 3.5"><path d="M0 3 L2.3 0.3 L4.6 3 Z" fill="#b2b2b2"/></svg>
<svg style="left:618.7px;top:218.5px" width="7" height="5" viewBox="0 0 7 5"><rect x="0.4" y="0.4" width="6.2" height="4.6" rx="1.4" fill="none" stroke="#b2b2b2" stroke-width="0.8"/><path d="M2.6 0.8 V4.6 M4.4 0.8 V4.6" stroke="#b2b2b2" stroke-width="0.7"/></svg>
<div class="ab" style="left:618.20px;top:227.10px;width:8.00px;height:0.60px;background:#d2d2d2"></div>
<div class="ab" style="left:618.20px;top:240.30px;width:8.00px;height:0.60px;background:#d2d2d2"></div>
<div class="ab" style="left:618.20px;top:253.60px;width:8.00px;height:0.60px;background:#d2d2d2"></div>
<div class="ab" style="left:618.20px;top:266.40px;width:8.00px;height:0.60px;background:#d2d2d2"></div>
<div class="ab" style="left:618.20px;top:280.20px;width:8.00px;height:0.60px;background:#d2d2d2"></div>
<div class="ab" style="left:618.20px;top:293.00px;width:8.00px;height:0.60px;background:#d2d2d2"></div>
<div class="ab" style="left:618.20px;top:306.20px;width:8.00px;height:0.60px;background:#d2d2d2"></div>
<svg style="left:618.5px;top:230.3px" width="8" height="8" viewBox="0 0 8 8"><circle cx="3.2" cy="3.2" r="2.6" fill="#f0f0f0" stroke="#b2b2b2" stroke-width="0.9"/><path d="M5 5 L7.6 7.6" stroke="#888" stroke-width="1.3"/></svg>
<svg style="left:618.5px;top:244.8px" width="8" height="6" viewBox="0 0 8 6"><path d="M0.5 3 L1.8 0.5 L3.1 3 M4.2 0.5 V3 M4.2 1.7 H6.5 V3 H4.2" fill="none" stroke="#b2b2b2" stroke-width="0.7"/><path d="M0.5 5 H7.5" stroke="#b2b2b2" stroke-width="0.8"/></svg>
<svg style="left:618.3px;top:257.8px" width="9" height="6" viewBox="0 0 9 6"><path d="M0.3 0.5 H5 L3.2 2.6 V5.6 L2.1 5 V2.6 Z" fill="none" stroke="#b2b2b2" stroke-width="0.7"/><rect x="5.6" y="2.5" width="3" height="3" fill="none" stroke="#b2b2b2" stroke-width="0.6"/></svg>
<svg style="left:617.5px;top:269.5px" width="10" height="9" viewBox="0 0 10 9"><rect x="0.5" y="0.5" width="6" height="5" fill="#f3f3f3" stroke="#b2b2b2" stroke-width="0.7"/><rect x="3.5" y="3.5" width="6" height="5" fill="#f8f8f8" stroke="#b2b2b2" stroke-width="0.7"/></svg>
<svg style="left:617.5px;top:281.9px" width="10" height="10" viewBox="0 0 10 10"><rect x="0.4" y="0.4" width="8.9" height="9.2" rx="0.8" fill="#b0c3e4" stroke="#8aa3cf" stroke-width="0.7"/><path d="M1.2 1.5 H8.5 M1.2 8.3 H8.5" stroke="#d0dcf0" stroke-width="0.6"/><path d="M2.3 3.4 H7.4 M2.3 6.2 H7.4" stroke="#f4f7fc" stroke-width="1"/></svg>
<svg style="left:617.5px;top:295.1px" width="10" height="10" viewBox="0 0 10 10"><rect x="0.4" y="0.4" width="8.9" height="9.2" rx="0.8" fill="#b0c3e4" stroke="#8aa3cf" stroke-width="0.7"/><path d="M1.2 1.5 H8.5 M1.2 8.3 H8.5" stroke="#d0dcf0" stroke-width="0.6"/><path d="M2.3 3.4 H7.4 M2.3 6.2 H7.4" stroke="#f4f7fc" stroke-width="1"/></svg>
<svg style="left:617.5px;top:308.4px" width="10" height="10" viewBox="0 0 10 10"><rect x="0.4" y="0.4" width="8.9" height="9.2" rx="0.8" fill="#b0c3e4" stroke="#8aa3cf" stroke-width="0.7"/><path d="M1.2 1.5 H8.5 M1.2 8.3 H8.5" stroke="#d0dcf0" stroke-width="0.6"/><path d="M2.3 3.4 H7.4 M2.3 6.2 H7.4" stroke="#f4f7fc" stroke-width="1"/></svg>
<svg style="left:619.5px;top:419.3px" width="5" height="3.5" viewBox="0 0 5 3.5"><path d="M0 0.3 L2.3 3 L4.6 0.3 Z" fill="#b2b2b2"/></svg>
<svg style="left:619.6px;top:427.7px" width="5" height="5" viewBox="0 0 5 5"><path d="M2.3 0 L4.6 2.3 L2.3 4.6 L0 2.3 Z" fill="#b2b2b2"/></svg>
<svg style="left:619.5px;top:436.5px" width="5" height="5" viewBox="0 0 5 5"><path d="M0 0.3 H4.6 M0.3 1.2 L2.3 3.6 L4.3 1.2 Z M0 4.4 H4.6" stroke="#b2b2b2" stroke-width="0.6" fill="#b2b2b2"/></svg>
<div class="ab" style="left:115.80px;top:468.80px;width:500.80px;height:11.20px;background:linear-gradient(#e2ebf9,#d9e6f8)"></div>
<div class="ab" style="left:616.60px;top:468.80px;width:9.40px;height:10.20px;background:#eef3fb"></div>
<div class="ab" style="left:143.20px;top:480.00px;width:0.80px;height:45.56px;background:#d9e4f4"></div>
<div class="ab" style="left:143.20px;top:468.80px;width:0.90px;height:11.20px;background:#f5f8fd"></div>
<div class="ab" style="left:291.70px;top:480.00px;width:0.80px;height:45.56px;background:#d9e4f4"></div>
<div class="ab" style="left:291.70px;top:468.80px;width:0.90px;height:11.20px;background:#f5f8fd"></div>
<div class="ab" style="left:392.00px;top:480.00px;width:0.80px;height:45.56px;background:#d9e4f4"></div>
<div class="ab" style="left:392.00px;top:468.80px;width:0.90px;height:11.20px;background:#f5f8fd"></div>
<div class="ab" style="left:493.30px;top:480.00px;width:0.80px;height:45.56px;background:#d9e4f4"></div>
<div class="ab" style="left:493.30px;top:468.80px;width:0.90px;height:11.20px;background:#f5f8fd"></div>
<div class="ab" style="left:594.20px;top:480.00px;width:0.80px;height:45.56px;background:#d9e4f4"></div>
<div class="ab" style="left:594.20px;top:468.80px;width:0.90px;height:11.20px;background:#f5f8fd"></div>
<div class="t" style="left:117.00px;top:471.00px;color:#9d9d9d">Lfd.Nr.</div>
<div class="t" style="left:145.90px;top:471.00px;color:#9d9d9d">Name</div>
<div class="t" style="left:295.00px;top:471.00px;color:#9d9d9d">Abteilung</div>
<div class="t" style="left:395.00px;top:471.00px;color:#9d9d9d">Telefon</div>
<div class="t" style="left:496.50px;top:471.00px;color:#9d9d9d">Mobiltelefon</div>
<div class="t r" style="right:517.70px;top:482.19px;">1</div>
<div class="t" style="left:143.80px;top:482.19px;">Paul Müller</div>
<div class="t" style="left:294.00px;top:482.19px;">Vertrieb/Marketing</div>
<div class="t" style="left:395.00px;top:482.19px;transform:scaleX(0.893)">+49 (1234) 56789-01</div>
<div class="t" style="left:495.80px;top:482.19px;transform:scaleX(0.887)">+49 (1235) 1045154</div>
<div class="ab" style="left:115.80px;top:491.39px;width:500.80px;height:11.39px;background:#dae8fb"></div>
<div class="ab" style="left:143.20px;top:491.39px;width:0.80px;height:11.39px;background:#cbdaf1"></div>
<div class="ab" style="left:291.70px;top:491.39px;width:0.80px;height:11.39px;background:#cbdaf1"></div>
<div class="ab" style="left:392.00px;top:491.39px;width:0.80px;height:11.39px;background:#cbdaf1"></div>
<div class="ab" style="left:493.30px;top:491.39px;width:0.80px;height:11.39px;background:#cbdaf1"></div>
<div class="ab" style="left:594.20px;top:491.39px;width:0.80px;height:11.39px;background:#cbdaf1"></div>
<div class="t r" style="right:517.70px;top:493.58px;">2</div>
<div class="t" style="left:143.80px;top:493.58px;">Melanie Neumann</div>
<div class="t" style="left:294.00px;top:493.58px;">Marketing</div>
<div class="t" style="left:395.00px;top:493.58px;transform:scaleX(0.893)">+49 (1234) 56789-00</div>
<div class="t" style="left:495.80px;top:493.58px;transform:scaleX(0.887)">+49 (1446) 46576774</div>
<div class="t r" style="right:517.70px;top:504.97px;">3</div>
<div class="t" style="left:143.80px;top:504.97px;">Susanne Braun</div>
<div class="t" style="left:294.00px;top:504.97px;">Einkauf</div>
<div class="t" style="left:395.00px;top:504.97px;transform:scaleX(0.893)">+49 (1234) 56789-00</div>
<div class="t" style="left:495.80px;top:504.97px;transform:scaleX(0.887)">+49 (174) 464789496</div>
<div class="ab" style="left:115.80px;top:514.17px;width:500.80px;height:11.39px;background:#dae8fb"></div>
<div class="ab" style="left:143.20px;top:514.17px;width:0.80px;height:11.39px;background:#cbdaf1"></div>
<div class="ab" style="left:291.70px;top:514.17px;width:0.80px;height:11.39px;background:#cbdaf1"></div>
<div class="ab" style="left:392.00px;top:514.17px;width:0.80px;height:11.39px;background:#cbdaf1"></div>
<div class="ab" style="left:493.30px;top:514.17px;width:0.80px;height:11.39px;background:#cbdaf1"></div>
<div class="ab" style="left:594.20px;top:514.17px;width:0.80px;height:11.39px;background:#cbdaf1"></div>
<svg style="left:617.2px;top:470.5px" width="9" height="8" viewBox="0 0 9 8"><path d="M4 0.5 H0.5 V7 H4" fill="#f2f2ee" stroke="#9a9a9a" stroke-width="0.8"/><rect x="3.3" y="1.6" width="4.6" height="5.2" rx="1" fill="#fff" stroke="#7e7e7e" stroke-width="0.8"/><path d="M3.4 2.4 H7.8" stroke="#666" stroke-width="1.1"/><rect x="4.4" y="3.6" width="2.4" height="2" fill="#fff"/></svg>
<svg style="left:619.5px;top:484px" width="5" height="3.5" viewBox="0 0 5 3.5"><path d="M0 3 L2.3 0.3 L4.6 3 Z" fill="#b2b2b2"/></svg>
<svg style="left:618.7px;top:497.3px" width="7" height="5" viewBox="0 0 7 5"><rect x="0.4" y="0.4" width="6.2" height="4.6" rx="1.4" fill="none" stroke="#b2b2b2" stroke-width="0.8"/><path d="M2.6 0.8 V4.6 M4.4 0.8 V4.6" stroke="#b2b2b2" stroke-width="0.7"/></svg>
<svg style="left:619.5px;top:512.5px" width="5" height="3.5" viewBox="0 0 5 3.5"><path d="M0 0.3 L2.3 3 L4.6 0.3 Z" fill="#b2b2b2"/></svg>
</body></html>
